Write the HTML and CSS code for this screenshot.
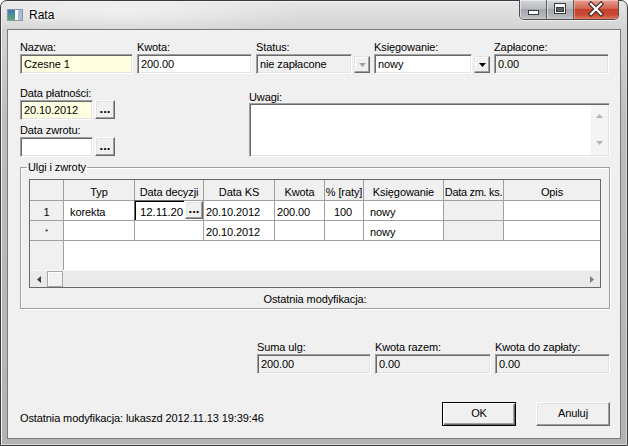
FILE: index.html
```html
<!DOCTYPE html>
<html lang="pl">
<head>
<meta charset="utf-8">
<title>Rata</title>
<link rel="stylesheet" href="styles.css">
</head>
<body>
<div class="window">
  <div class="titlebar">
    <span class="app-icon">
      <svg width="16" height="12" viewBox="0 0 16 12">
        <defs>
          <linearGradient id="ig" x1="0" y1="0" x2="0" y2="1">
            <stop offset="0" stop-color="#3f78b8"/>
            <stop offset="1" stop-color="#5aa874"/>
          </linearGradient>
        </defs>
        <rect x="0" y="0" width="16" height="12" fill="#d8dee6"/>
        <rect x="0.5" y="0.5" width="15" height="11" fill="none" stroke="#8a96a4"/>
        <rect x="1" y="1" width="7" height="10" fill="url(#ig)"/>
        <rect x="8" y="1" width="3" height="10" fill="#ffffff"/>
        <rect x="11" y="1" width="4" height="10" fill="#a9bfd6"/>
      </svg>
    </span>
    <span class="title">Rata</span>
    <div class="caption-buttons">
      <div class="cb cb-min">
        <svg width="26" height="19" viewBox="0 0 26 19"><rect x="8.5" y="10.5" width="10" height="4" fill="#fff" stroke="#3a3a3a"/></svg>
      </div>
      <div class="cb cb-max">
        <svg width="26" height="19" viewBox="0 0 26 19"><rect x="7.5" y="3.5" width="11" height="10" fill="#fff" stroke="#3a3a3a"/><rect x="9.5" y="7.5" width="7" height="4" fill="#5d6166" stroke="#3a3a3a"/></svg>
      </div>
      <div class="cb cb-close">
        <svg width="44" height="19" viewBox="0 0 44 19"><path d="M17 4 L27 14 M27 4 L17 14" stroke="#3a2a28" stroke-width="4.4" stroke-linecap="square"/><path d="M17 4 L27 14 M27 4 L17 14" stroke="#fff" stroke-width="2.2" stroke-linecap="square"/></svg>
      </div>
    </div>
  </div>

  <div class="client">
    <div class="row-top">
      <div class="field w113">
        <div class="lbl">Nazwa:</div>
        <div class="edit yellow">Czesne 1</div>
      </div>
      <div class="field w115">
        <div class="lbl">Kwota:</div>
        <div class="edit">200.00</div>
      </div>
      <div class="field w114">
        <div class="lbl">Status:</div>
        <div class="combo">
          <div class="edit ro">nie zapłacone</div>
          <div class="dd-btn disabled"><svg width="7" height="4" viewBox="0 0 7 4"><path d="M0 0 H7 L3.5 4 Z" fill="#a0a0a0"/></svg></div>
        </div>
      </div>
      <div class="field w116">
        <div class="lbl">Księgowanie:</div>
        <div class="combo">
          <div class="edit">nowy</div>
          <div class="dd-btn"><svg width="7" height="4" viewBox="0 0 7 4"><path d="M0 0 H7 L3.5 4 Z" fill="#000"/></svg></div>
        </div>
      </div>
      <div class="field w115">
        <div class="lbl">Zapłacone:</div>
        <div class="edit ro">0.00</div>
      </div>
    </div>

    <div class="row-mid">
      <div class="col-dates">
        <div class="field">
          <div class="lbl">Data płatności:</div>
          <div class="date-edit">
            <div class="edit yellow date">20.10.2012</div>
            <div class="btn dots">...</div>
          </div>
        </div>
        <div class="field second">
          <div class="lbl">Data zwrotu:</div>
          <div class="date-edit">
            <div class="edit date"></div>
            <div class="btn dots">...</div>
          </div>
        </div>
      </div>
      <div class="field uwagi">
        <div class="lbl short">Uwagi:</div>
        <div class="memo">
          <div class="memo-text"></div>
          <div class="vscroll">
            <svg width="7" height="4" viewBox="0 0 7 4"><path d="M0 4 H7 L3.5 0 Z" fill="#b4b4b4"/></svg>
            <svg width="7" height="4" viewBox="0 0 7 4"><path d="M0 0 H7 L3.5 4 Z" fill="#b4b4b4"/></svg>
          </div>
        </div>
      </div>
    </div>

    <fieldset class="group">
      <legend>Ulgi i zwroty</legend>
      <div class="grid">
        <div class="grid-rows">
          <div class="c hd">&nbsp;</div>
          <div class="c hd ctr">Typ</div>
          <div class="c hd ctr">Data decyzji</div>
          <div class="c hd ctr">Data KS</div>
          <div class="c hd ctr">Kwota</div>
          <div class="c hd ctr">% [raty]</div>
          <div class="c hd ctr">Księgowanie</div>
          <div class="c hd ctr tight">Data zm. ks.</div>
          <div class="c hd ctr last">Opis</div>

          <div class="c rh ctr">1</div>
          <div class="c p6">korekta</div>
          <div class="c editing">
            <div class="cell-edit">12.11.20</div>
            <div class="btn cell-dots">...</div>
          </div>
          <div class="c p2">20.10.2012</div>
          <div class="c p2">200.00</div>
          <div class="c p10">100</div>
          <div class="c p6">nowy</div>
          <div class="c grey"></div>
          <div class="c last"></div>

          <div class="c rh ctr star">*</div>
          <div class="c"></div>
          <div class="c"></div>
          <div class="c p2">20.10.2012</div>
          <div class="c"></div>
          <div class="c"></div>
          <div class="c p6">nowy</div>
          <div class="c grey"></div>
          <div class="c last"></div>
        </div>
        <div class="grid-empty"><div class="rh-strip"></div></div>
        <div class="hscroll">
          <div class="hs-arrow"><svg width="4" height="7" viewBox="0 0 4 7"><path d="M4 0 V7 L0 3.5 Z" fill="#404040"/></svg></div>
          <div class="hs-thumb"></div>
          <div class="hs-track"></div>
          <div class="hs-arrow"><svg width="4" height="7" viewBox="0 0 4 7"><path d="M0 0 V7 L4 3.5 Z" fill="#808080"/></svg></div>
        </div>
      </div>
      <div class="group-foot">Ostatnia modyfikacja:</div>
    </fieldset>

    <div class="row-sums">
      <div class="field w114">
        <div class="lbl">Suma ulg:</div>
        <div class="edit ro">200.00</div>
      </div>
      <div class="field w116">
        <div class="lbl">Kwota razem:</div>
        <div class="edit ro">0.00</div>
      </div>
      <div class="field w115">
        <div class="lbl">Kwota do zapłaty:</div>
        <div class="edit ro">0.00</div>
      </div>
    </div>

    <div class="row-bottom">
      <div class="last-mod">Ostatnia modyfikacja: lukaszd 2012.11.13 19:39:46</div>
      <div class="buttons">
        <div class="btn push default">OK</div>
        <div class="btn push">Anuluj</div>
      </div>
    </div>
  </div>
</div>
</body>
</html>
```

FILE: styles.css
```css
* { box-sizing: border-box; }
html, body { margin: 0; padding: 0; }
body {
  width: 628px;
  height: 446px;
  overflow: hidden;
  background: #fff;
  font-family: "Liberation Sans", Arial, sans-serif;
  font-size: 11px;
  letter-spacing: -0.1px;
  color: #000;
}

/* window frame */
.window {
  width: 628px;
  height: 446px;
  border: 1px solid #3c3c3c;
  border-radius: 7px 7px 0 0;
  background:
    radial-gradient(ellipse 180px 26px at 120px 10px, rgba(255,255,255,0.55), rgba(255,255,255,0) 100%),
    linear-gradient(180deg, #e6e6e6 0px, #d3d3d3 28px, #bdbdbd 120px, #b3b3b3 100%);
  box-shadow: inset 1px 1px 0 #f2f2f2, inset -1px -1px 0 #d8d8d8;
  padding: 0 6px 6px 6px;
  display: flex;
  flex-direction: column;
}
.titlebar {
  height: 28px;
  display: flex;
  align-items: flex-start;
  flex: none;
}
.app-icon { margin-top: 8px; width: 16px; height: 12px; display: block; }
.app-icon svg { display: block; }
.title {
  margin-left: 6px;
  margin-top: 7px;
  font-size: 12px;
  line-height: 14px;
  letter-spacing: 0;
  color: #000;
  text-shadow: 0 0 6px #fff, 0 0 3px #fff;
}
.caption-buttons {
  margin-left: auto;
  margin-right: 2px;
  margin-top: -1px;
  display: flex;
  height: 20px;
  border: 1px solid #4e4e4e;
  border-top: 0;
  border-radius: 0 0 5px 5px;
  overflow: hidden;
  box-shadow: 0 1px 0 rgba(255,255,255,0.6);
}
.cb { height: 19px; display: flex; }
.cb svg { display: block; }
.cb-min, .cb-max {
  width: 27px;
  border-right: 1px solid #5a5a5a;
  background: linear-gradient(180deg, #d4d6d9 0%, #b9bcc0 45%, #a4a7ac 50%, #b3b6ba 85%, #c9cbce 100%);
  box-shadow: inset 1px 1px 0 rgba(255,255,255,0.5);
}
.cb-close {
  width: 44px;
  background: linear-gradient(180deg, #e8a294 0%, #d4624f 45%, #c4402c 50%, #cc4c36 80%, #e07a60 100%);
  box-shadow: inset 1px 1px 0 rgba(255,255,255,0.35);
}

/* client area */
.client {
  flex: 1;
  background: #f0f0f0;
  border: 1px solid #7a7a7a;
  padding: 11px 10px 0 12px;
  display: flex;
  flex-direction: column;
}

.field { display: flex; flex-direction: column; }
.w113 { width: 113px; }
.w114 { width: 114px; }
.w115 { width: 115px; }
.w116 { width: 116px; }
.lbl { height: 13px; line-height: 13px; white-space: nowrap; }
.lbl.short { height: 12px; }

.edit {
  height: 20px;
  background: #fff;
  border-top: 1px solid #a0a0a0;
  border-left: 1px solid #a0a0a0;
  border-right: 1px solid #fff;
  border-bottom: 1px solid #fff;
  box-shadow: inset 1px 1px 0 #696969, inset -1px -1px 0 #e3e3e3;
  padding: 0 3px;
  line-height: 18px;
  white-space: nowrap;
  overflow: hidden;
}
.edit.yellow { background: #ffffe1; }
.edit.ro { background: #f0f0f0; }

.btn {
  background: #f0f0f0;
  border: 1px solid;
  border-color: #fff #696969 #696969 #fff;
  box-shadow: inset -1px -1px 0 #a0a0a0, inset 1px 1px 0 #e3e3e3;
}

.row-top { display: flex; gap: 4px; }

.combo { display: flex; align-items: center; gap: 2px; }
.combo .edit { flex: 1; }
.dd-btn {
  width: 16px;
  height: 17px;
  flex: none;
  background: #f0f0f0;
  border: 1px solid;
  border-color: #e3e3e3 #696969 #696969 #e3e3e3;
  box-shadow: inset -1px -1px 0 #a0a0a0, inset 1px 1px 0 #fff;
  display: flex;
  align-items: center;
  justify-content: center;
  padding-top: 1px;
}
.dd-btn svg { display: block; }

.row-mid {
  display: flex;
  justify-content: space-between;
  margin-top: 13px;
}
.col-dates { display: flex; flex-direction: column; }
.col-dates .second { margin-top: 4px; }
.date-edit { display: flex; gap: 2px; align-items: flex-start; }
.edit.date { width: 73px; }
.btn.dots {
  width: 20px;
  height: 19px;
  font-weight: bold;
  text-align: center;
  line-height: 16px;
  font-size: 13px;
  letter-spacing: 0;
}

.uwagi { width: 361px; margin-top: 4px; }
.memo {
  height: 54px;
  display: flex;
  background: #fff;
  border-top: 1px solid #a0a0a0;
  border-left: 1px solid #a0a0a0;
  border-right: 1px solid #fff;
  border-bottom: 1px solid #fff;
  box-shadow: inset 1px 1px 0 #696969, inset -1px -1px 0 #e3e3e3;
  padding: 1px 1px 1px 1px;
}
.memo-text { flex: 1; }
.vscroll {
  width: 17px;
  background: #f4f4f4;
  display: flex;
  flex-direction: column;
  align-items: center;
  justify-content: space-between;
  padding: 9px 0 10px 0;
}
.vscroll svg { display: block; }

/* group */
.group {
  margin: 4px 0 0 0;
  padding: 0 0 2px 0;
  border: 1px solid #a0a0a0;
  box-shadow: inset 1px 1px 0 #fff, 1px 1px 0 #fff;
  min-width: 0;
}
.group legend {
  margin-left: 6px;
  padding: 0 1px;
  line-height: 13px;
  height: 13px;
}
.grid {
  margin: 5px 0 0 8px;
  width: 572px;
  height: 109px;
  border: 1px solid #696969;
  background: #fff;
  display: flex;
  flex-direction: column;
}
.grid-rows {
  display: grid;
  grid-template-columns: 34px 71px 69px 71px 50px 39px 80px 60px 96px;
  grid-template-rows: 21px 20px 20px;
}
.c {
  border-right: 1px solid #a0a0a0;
  border-bottom: 1px solid #a0a0a0;
  white-space: nowrap;
  overflow: hidden;
  line-height: 13px;
  padding-top: 5px;
  padding-left: 2px;
}
.c.last { border-right: 0; }
.c.hd { background: #f0f0f0; padding-top: 6px; }
.c.rh { background: #f0f0f0; }
.c.grey { background: #f0f0f0; }
.c.ctr { text-align: center; padding-left: 0; }
.c.tight { letter-spacing: -0.3px; }
.c.p2 { padding-left: 2px; }
.c.p6 { padding-left: 6px; }
.c.p10 { padding-left: 9px; }
.c.star { font-size: 8px; padding-top: 4px; }
.c.editing {
  padding: 0;
  display: flex;
  overflow: visible;
}
.cell-edit {
  width: 50px;
  height: 20px;
  margin-left: -1px;
  margin-top: -1px;
  background: #fff;
  border-top: 1px solid #696969;
  border-left: 1px solid #696969;
  box-shadow: inset 1px 1px 0 #000;
  padding: 5px 0 0 5px;
  line-height: 13px;
  font-size: 11.5px;
  overflow: hidden;
  white-space: nowrap;
}
.btn.cell-dots {
  width: 18px;
  height: 18px;
  margin-left: 1px;
  font-weight: bold;
  font-size: 13px;
  letter-spacing: 0;
  text-align: center;
  line-height: 14px;
}
.grid-empty {
  flex: 1;
  display: flex;
}
.rh-strip {
  width: 34px;
  background: #f0f0f0;
  border-right: 1px solid #a0a0a0;
}
.hscroll {
  height: 17px;
  display: flex;
  background: #eaeaea;
  border-top: 1px solid #f6f6f6;
}
.hs-arrow {
  width: 17px;
  display: flex;
  align-items: center;
  justify-content: center;
}
.hs-arrow svg { display: block; }
.hs-thumb {
  width: 16px;
  background: #f2f2f2;
  border: 1px solid #a8a8a8;
  box-shadow: inset 1px 1px 0 #fff;
}
.hs-track { flex: 1; }
.group-foot {
  margin-top: 5px;
  text-align: center;
  line-height: 13px;
  height: 13px;
}

/* sums */
.row-sums {
  display: flex;
  justify-content: flex-end;
  gap: 4px;
  margin-top: 32px;
}

/* bottom */
.row-bottom {
  display: flex;
  align-items: flex-end;
  justify-content: space-between;
  margin-top: 28px;
}
.last-mod { line-height: 13px; margin-bottom: 1px; white-space: nowrap; }
.buttons { display: flex; gap: 20px; }
.btn.push {
  width: 74px;
  height: 24px;
  text-align: center;
  line-height: 21px;
}
.btn.push.default {
  border-color: #000;
  box-shadow: inset 1px 1px 0 #fff, inset -1px -1px 0 #696969, inset -2px -2px 0 #a0a0a0;
}
```
